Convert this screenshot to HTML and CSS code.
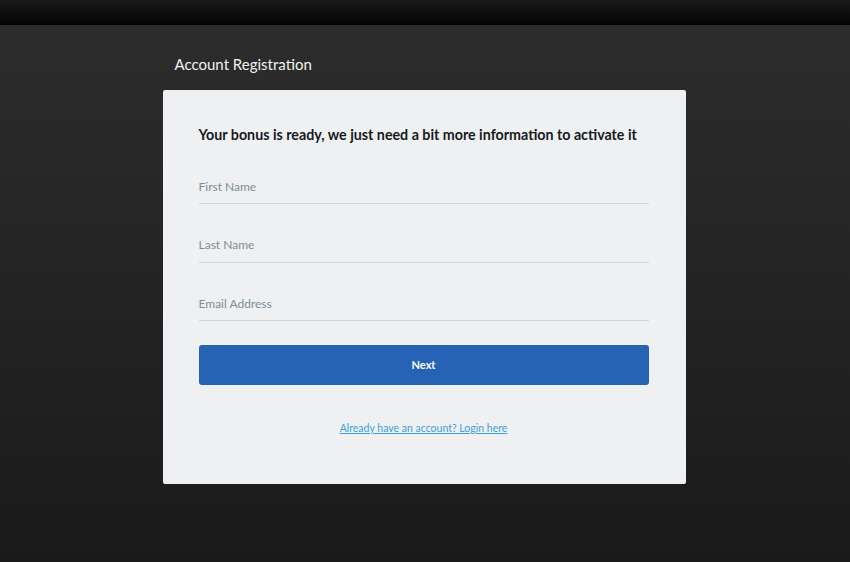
FILE: index.html
```html
<!DOCTYPE html>
<html lang="en">
<head>
<meta charset="utf-8">
<title>Account Registration</title>
<link rel="stylesheet" href="styles.css">
</head>
<body>
<div class="topbar"></div>
<main class="main">
  <div class="panel">
    <h1 class="title">Account Registration</h1>
    <form class="card">
      <h2 class="lead">Your bonus is ready, we just need a bit more information to activate it</h2>
      <div class="fields">
        <input class="field" type="text" placeholder="First Name">
        <input class="field" type="text" placeholder="Last Name">
        <input class="field" type="email" placeholder="Email Address">
        <button class="btn" type="button">Next</button>
      </div>
      <a class="login" href="#">Already have an account? Login here</a>
    </form>
  </div>
</main>
</body>
</html>
```
FILE: styles.css
```css
html, body {
  margin: 0;
  padding: 0;
  height: 100%;
}
body {
  font-family: Lato, "Open Sans", sans-serif;
  background: linear-gradient(to bottom, #2e2d2e 0%, #252425 50%, #1b1a1b 100%);
  min-height: 562px;
}
.topbar {
  height: 25px;
  background: linear-gradient(to bottom, #1a1a1a, #030303);
}
.main {
  display: flex;
  justify-content: center;
  padding-top: 30px;
}
.panel {
  width: 523px;
  margin-right: 2px;
}
.title {
  margin: 0 0 16px 12px;
  font-size: 15px;
  font-weight: 400;
  color: #f2f2f2;
  line-height: 19px;
}
.card {
  background: #eef0f2;
  border-radius: 2px;
  padding: 36px 37px 49px 36px;
  display: flex;
  flex-direction: column;
}
.lead {
  margin: 0 0 25px 0;
  font-size: 14.25px;
  line-height: 18px;
  font-weight: 700;
  color: #151a1f;
}
.fields {
  display: flex;
  flex-direction: column;
  gap: 23.6px;
}
.field {
  height: 35px;
  box-sizing: border-box;
  border: none;
  border-bottom: 1px solid #c9d9dc;
  background: transparent;
  padding: 0;
  font-family: inherit;
  font-size: 12px;
  color: #333;
  outline: none;
}
.field::placeholder {
  color: #7f8d93;
}
.btn {
  height: 40px;
  border: none;
  border-radius: 3px;
  background: #2663b5;
  color: #fff;
  font-family: inherit;
  font-weight: 700;
  font-size: 11px;
  margin-bottom: 36px;
}
.login {
  align-self: center;
  font-size: 10.5px;
  line-height: 14px;
  color: #3e9fdb;
  text-decoration: underline;
}
```
